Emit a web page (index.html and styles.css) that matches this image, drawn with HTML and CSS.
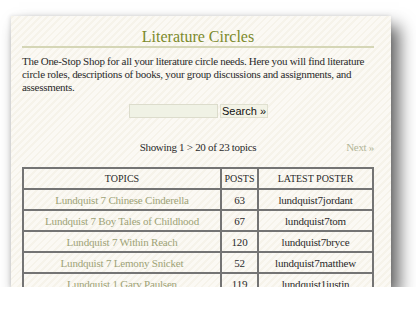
FILE: index.html
```html
<!doctype html>
<html lang="en">
    <head>
        <title>Literature Circles</title>
        <meta name="viewport" content="width=device-width, initial-scale=1"/>
        <link rel="stylesheet" href="styles.css">
    </head>
    <body>
        <div class="page">
            <h1>Literature Circles</h1>
            <p class="intro">The One-Stop Shop for all your literature circle needs. Here you will find literature circle roles, descriptions of books, your group discussions and assignments, and assessments.</p>
            <form class="search">
                <input type="text">
                <button type="button">Search &raquo;</button>
            </form>
            <div class="pager">
                <span class="count">Showing 1 &gt; 20 of 23 topics</span>
                <a class="next" href="#">Next &raquo;</a>
            </div>
            <table class="topics">
                <thead>
                    <tr><th class="col-topic">Topics</th><th class="col-posts">Posts</th><th>Latest Poster</th></tr>
                </thead>
                <tbody>
                    <tr><td><a href="#">Lundquist 7 Chinese Cinderella</a></td><td>63</td><td>lundquist7jordant</td></tr>
                    <tr><td><a href="#">Lundquist 7 Boy Tales of Childhood</a></td><td>67</td><td>lundquist7tom</td></tr>
                    <tr><td><a href="#">Lundquist 7 Within Reach</a></td><td>120</td><td>lundquist7bryce</td></tr>
                    <tr><td><a href="#">Lundquist 7 Lemony Snicket</a></td><td>52</td><td>lundquist7matthew</td></tr>
                    <tr><td><a href="#">Lundquist 1 Gary Paulsen</a></td><td>119</td><td>lundquist1justin</td></tr>
                </tbody>
            </table>
        </div>
    </body>
</html>
```

FILE: styles.css
```css
body {
    margin: 0;
    background-color: #fff;
    font-family: "Liberation Serif", "DejaVu Serif", serif;
}
.page {
    margin: 16px 0 0 11px;
    width: 380px;
    height: 271px;
    box-sizing: border-box;
    padding: 0 17px 0 11px;
    overflow: hidden;
    background-color: #fbf9f3;
    background-image: repeating-linear-gradient(-45deg, #fbf9f4 0, #fbf9f4 3px, #f6f3ea 3px, #f6f3ea 5px);
    box-shadow: 8px 10px 16px rgba(0, 0, 0, 0.62), -1px 0 4px rgba(0, 0, 0, 0.12);
}
h1 {
    margin: 12px 0 0;
    height: 18px;
    line-height: 18px;
    font-size: 16px;
    font-weight: normal;
    text-align: center;
    color: #7b8a2c;
    border-bottom: 2px solid #d5d6b6;
}
.intro {
    margin: 7px 0 0;
    font-size: 11px;
    line-height: 13px;
    letter-spacing: -0.28px;
    color: #2a2a2a;
}
.search {
    margin: 10px 0 0;
    display: flex;
    justify-content: center;
    gap: 2px;
    height: 14px;
    padding-left: 1px;
}
.search input {
    width: 89px;
    height: 14px;
    box-sizing: border-box;
    margin: 0;
    border: 1px solid #dcdccc;
    background-color: #f0f2e5;
}
.search button {
    height: 14px;
    width: 48px;
    box-sizing: border-box;
    margin: 0;
    padding: 0;
    border: 1px solid #e0e0d0;
    background-color: #f3f3e6;
    font-family: "Liberation Sans", Arial, sans-serif;
    font-size: 11px;
    line-height: 12px;
    color: #111;
}
.pager {
    margin: 23px 0 0;
    display: flex;
    justify-content: center;
    position: relative;
    font-size: 11px;
    line-height: 13px;
    letter-spacing: -0.3px;
    color: #2a2a2a;
}
.pager .next {
    position: absolute;
    right: 0;
    top: 0;
    color: #b3b699;
    text-decoration: none;
}
.topics {
    margin-top: 13px;
    width: 352px;
    border-collapse: collapse;
    font-size: 11px;
    letter-spacing: -0.2px;
    color: #2a2a2a;
}
.topics th,
.topics td {
    height: 19px;
    padding: 0;
    border: 2px solid #747474;
    text-align: center;
    vertical-align: middle;
}
.topics th {
    font-weight: normal;
    font-size: 10px;
    letter-spacing: 0;
    text-transform: uppercase;
}
.topics .col-topic {
    width: 196px;
}
.topics .col-posts {
    width: 35px;
}
.topics a {
    color: #9ea377;
    text-decoration: none;
}
```
